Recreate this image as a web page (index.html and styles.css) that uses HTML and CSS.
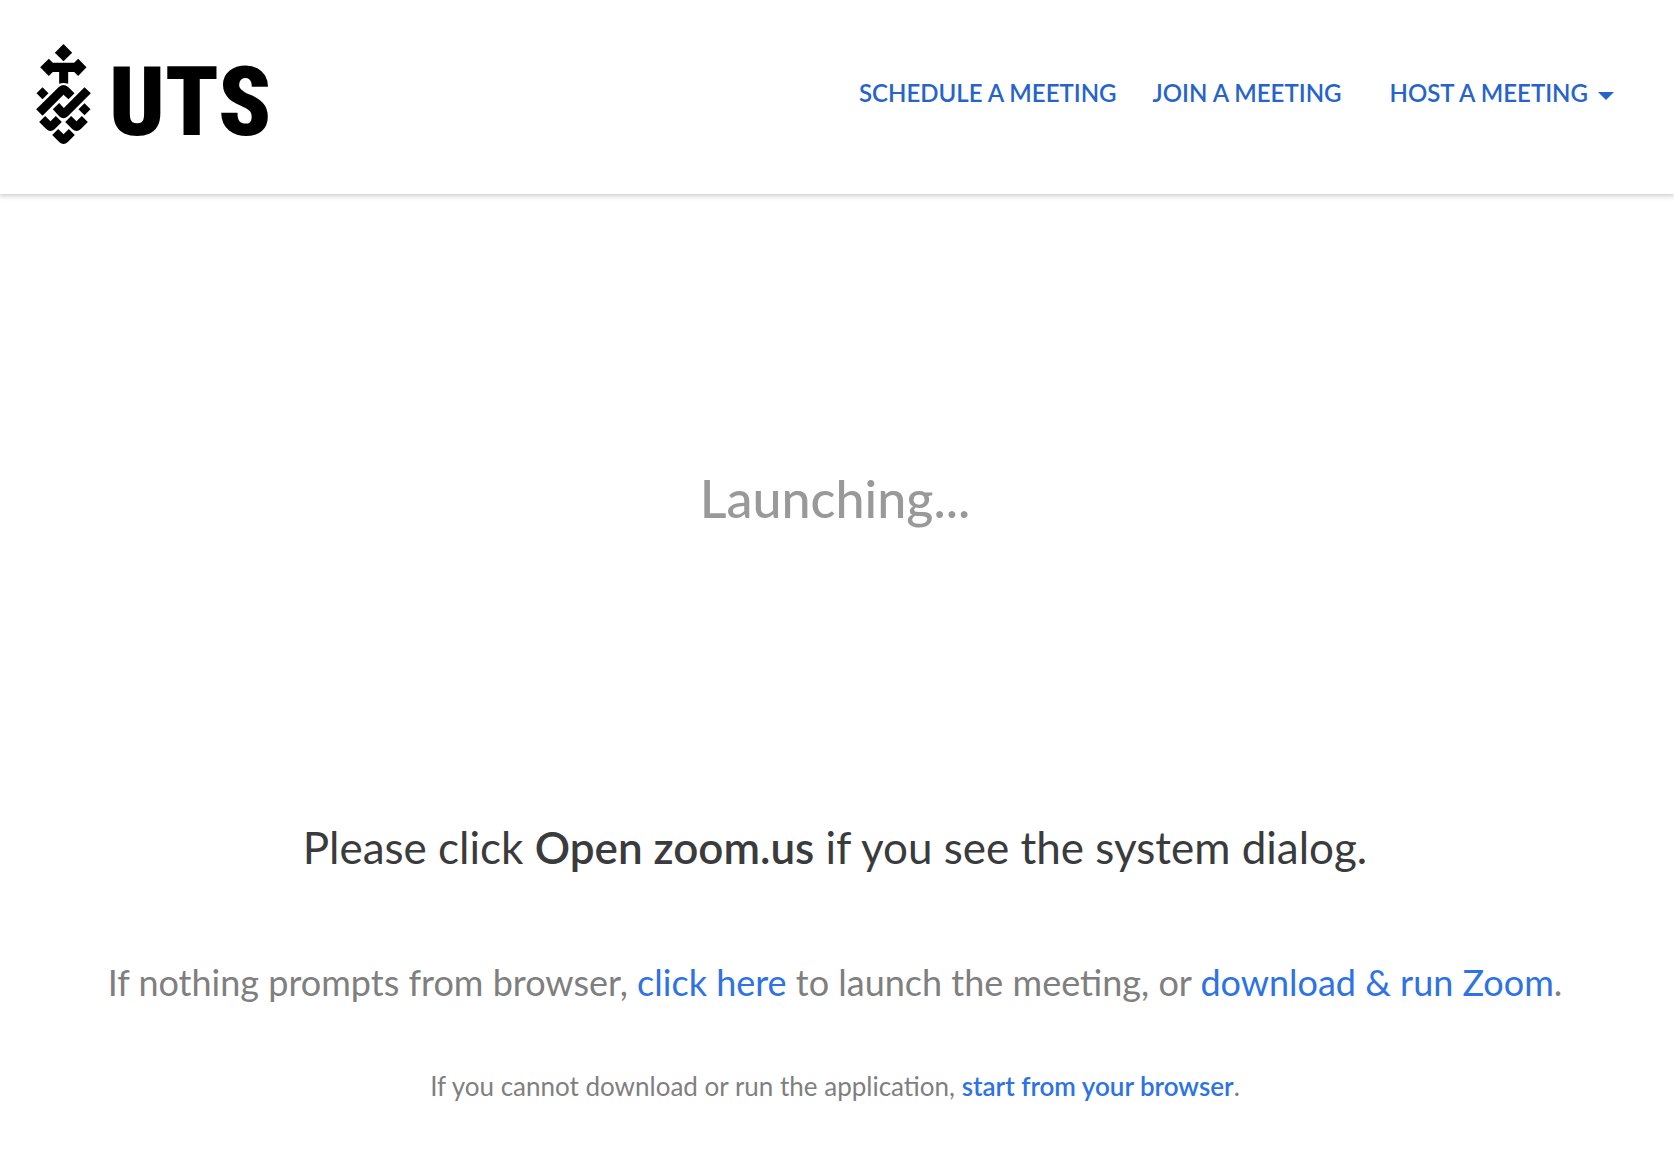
FILE: index.html
```html
<!DOCTYPE html>
<html lang="en">
<head>
  <meta charset="UTF-8">
  <title>Launch Meeting - Zoom</title>
  <link rel="stylesheet" href="styles.css">
</head>
<body>
  <header class="header">
    <a class="logo" href="#">
      <svg class="logo-mark" viewBox="48 42 164 300" aria-hidden="true">
        <path d="M130 42l26 26-26 26-26-26z"/>
        <path d="M60 112l26-26 12 12h64l12-12 25 26-25 26-12-12h-18v35q-14-4-27 0v-35H98l-12 12z"/>
        <path d="M67 172l18 18-18 18-18-18z"/>
        <path d="M193 220l18 18-18 18-18-18z"/>
        <path d="M48 238l68-67q14-12 28 0l19 19-18 18-15-14-63 63z"/>
        <path d="M98 238l19-19 14 15 62-62 19 18-69 69q-13 12-26 0z"/>
        <path d="M57 276l18-18 16 16 16-16 18 18-21 21q-13 12-26 0z"/>
        <path d="M135 276l18-18 16 16 16-16 18 18-21 21q-13 12-26 0z"/>
        <path d="M96 315l18-18 16 16 16-16 18 18-21 21q-13 12-26 0z"/>
      </svg>
      <span class="logo-text">UTS</span>
    </a>
    <nav class="nav">
      <a href="#">SCHEDULE A MEETING</a>
      <a href="#">JOIN A MEETING</a>
      <button class="dropdown" type="button">HOST A MEETING <span class="caret"></span></button>
    </nav>
  </header>

  <main class="main">
    <h1 class="launching">Launching...</h1>
    <p class="prompt">Please click <strong>Open zoom.us</strong> if you see the system dialog.</p>
    <p class="download">If nothing prompts from browser, <a href="#">click here</a> to launch the meeting, or <a href="#">download &amp; run Zoom</a>.</p>
    <p class="browser">If you cannot download or run the application, <a href="#">start from your browser</a>.</p>
  </main>
</body>
</html>
```
FILE: styles.css
```css
body {
  margin: 0;
  background: #fff;
  font-family: Lato, "Open Sans", sans-serif;
  color: #7f7f7f;
}
a {
  color: #2d72e6;
  text-decoration: none;
}
a:hover {
  text-decoration: underline;
}
.header {
  display: flex;
  justify-content: space-between;
  align-items: flex-start;
  padding: 44px 60px 34px 36px;
  box-shadow: 0 1px 5px 1px rgba(0,0,0,0.2);
}
.logo {
  display: flex;
  align-items: flex-start;
  gap: 18px;
  color: #000;
}
.logo-mark {
  width: 55px;
  height: 100px;
}
.logo-text {
  font-family: "Roboto Condensed", Roboto, sans-serif;
  font-size: 97px;
  font-weight: 900;
  line-height: 116px;
}
.nav {
  display: flex;
  align-items: center;
  gap: 36px;
  height: 98px;
}
.nav a,
.dropdown {
  color: #2664cc;
  font-size: 24px;
  font-weight: 600;
  line-height: 30px;
}
.dropdown {
  display: flex;
  align-items: center;
  gap: 10px;
  margin-left: 12px;
  padding: 0;
  border: none;
  background: none;
  font-family: inherit;
  cursor: pointer;
}
.caret {
  margin-top: 6px;
  border-top: 8px solid;
  border-left: 8px solid transparent;
  border-right: 8px solid transparent;
}
.main {
  padding: 0 24px 0 20px;
  text-align: center;
}
.launching {
  margin: 264px 0 0;
  color: #999;
  font-size: 52px;
  font-weight: 500;
  line-height: 80px;
}
.prompt {
  margin: 276px 0 0;
  color: #3a3b3d;
  font-size: 44px;
  line-height: 66px;
}
.prompt strong {
  font-weight: 600;
}
.download {
  margin: 75px 0 0;
  font-size: 36px;
  line-height: 54px;
}
.browser {
  margin: 57px 0 0;
  font-size: 26px;
  line-height: 40px;
}
.browser a {
  font-weight: 600;
}
```
